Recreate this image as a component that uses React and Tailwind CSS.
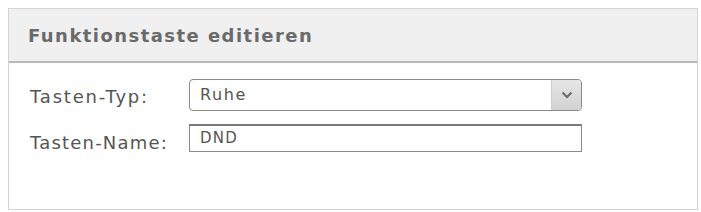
export default function App() {
  return (
    <div className="w-[701px] h-[212px] bg-white pt-[8px] pl-[8px] pr-[3px]" style={{ fontFamily: '"DejaVu Sans", Verdana, sans-serif' }}>
      <div className="h-[202px] border border-[#d4d4d4] bg-white flex flex-col">
        <div className="h-[54px] bg-[#f0f0f0] border-b-2 border-[#b8b8b8] flex items-center pl-[19px]">
          <span className="text-[18px] font-bold text-[#6a6a6a] tracking-[1.45px]">Funktionstaste editieren</span>
        </div>
        <div className="flex flex-col pl-[21px] pt-[16px] gap-[13px]">
          <div className="flex items-start">
            <span className="w-[159px] pt-[9px] leading-none text-[18px] text-[#555555] tracking-[1.8px]">Tasten-Typ:</span>
            <div className="w-[393px] h-[32px] border border-[#8a8a8a] rounded-[4px] flex items-center overflow-hidden">
              <span className="flex-1 pl-[10px] text-[16px] text-[#555555] tracking-[1.6px]">Ruhe</span>
              <div className="w-[30px] h-full bg-gradient-to-b from-[#e6e6e6] to-[#d2d2d2] border-l border-[#cfcfcf] flex items-center justify-center">
                <svg width="12" height="8" viewBox="0 0 12 8">
                  <path d="M1.5 1.5 L6 6 L10.5 1.5" fill="none" stroke="#6b6b6b" strokeWidth="2" />
                </svg>
              </div>
            </div>
          </div>
          <div className="flex items-start">
            <span className="w-[159px] pt-[10px] leading-none text-[18px] text-[#555555] tracking-[1.2px]">Tasten-Name:</span>
            <div className="w-[393px] h-[28px] border border-[#8a8a8a] border-t-2 border-t-[#7a7a7a] flex items-center">
              <span className="pl-[10px] text-[15px] text-[#555555] tracking-[1.3px]">DND</span>
            </div>
          </div>
        </div>
      </div>
    </div>
  );
}
